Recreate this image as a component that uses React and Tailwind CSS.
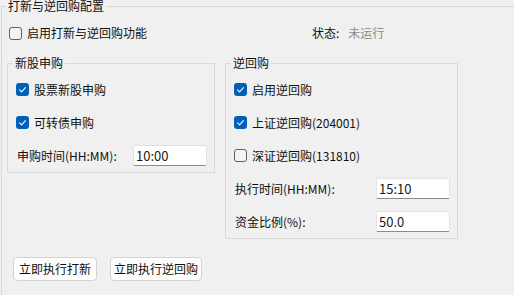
import React from 'react';

const font = { fontFamily: '"Noto Sans CJK SC", "Noto Sans", sans-serif' };

function Check({ checked }) {
  if (checked) {
    return (
      <span className="flex h-[13px] w-[13px] shrink-0 items-center justify-center rounded-[3px] bg-[#005fb8]">
        <svg width="13" height="13" viewBox="0 0 13 13" fill="none">
          <path d="M3.6 6.9 L5.6 8.8 L9.4 4.7" stroke="#ffffff" strokeWidth="1.1" strokeLinecap="round" strokeLinejoin="round" />
        </svg>
      </span>
    );
  }
  return <span className="h-[13px] w-[13px] shrink-0 rounded-[3px] border border-[#5f5f5f] bg-[#f4f4f4]" />;
}

function CheckRow({ checked, label }) {
  return (
    <div className="flex h-[33px] items-center gap-[5px] pl-[8px]">
      <Check checked={checked} />
      <span className="leading-[14px]">{label}</span>
    </div>
  );
}

function Field({ label, value, labelWidth }) {
  return (
    <div className="flex h-[33px] items-center pl-[9px]">
      <span className={`${labelWidth} leading-[14px]`}>{label}</span>
      <div className="flex h-[21px] w-[74px] items-center rounded-[2px] border border-[#e3e3e3] border-b-[#8a8a8a] bg-white pl-[2px] text-[13px] text-[#1a1a1a]">
        {value}
      </div>
    </div>
  );
}

export default function App() {
  return (
    <div className="h-[295px] w-[514px] overflow-hidden bg-[#f0f0f0] text-[12px] text-[#111111]" style={font}>
      <fieldset className="ml-px h-[320px] w-[540px] border border-[#d9d9d9]">
        <legend className="ml-[4px] px-[2px] leading-[12px]">打新与逆回购配置</legend>

        <div className="mt-[14px] flex h-[14px] items-center pl-[7px]">
          <div className="flex w-[303px] items-center gap-[5px]">
            <Check checked={false} />
            <span className="leading-[14px]">启用打新与逆回购功能</span>
          </div>
          <span className="leading-[14px]">状态:</span>
          <span className="ml-[9px] leading-[14px] text-[#8a8a8a]">未运行</span>
        </div>

        <div className="ml-[5px] mt-[17px] flex items-start gap-[10px]">
          <fieldset className="w-[208px] border border-[#dadada]">
            <legend className="ml-[5px] px-[2px] leading-[12px]">新股申购</legend>
            <div className="pt-[4px]">
              <CheckRow checked label="股票新股申购" />
              <CheckRow checked label="可转债申购" />
              <Field label="申购时间(HH:MM):" value="10:00" labelWidth="w-[116px]" />
            </div>
          </fieldset>

          <fieldset className="w-[233px] border border-[#dadada]">
            <legend className="ml-[5px] px-[2px] leading-[12px]">逆回购</legend>
            <div className="pt-[4px]">
              <CheckRow checked label="启用逆回购" />
              <CheckRow checked label="上证逆回购(204001)" />
              <CheckRow checked={false} label="深证逆回购(131810)" />
              <Field label="执行时间(HH:MM):" value="15:10" labelWidth="w-[141px]" />
              <Field label="资金比例(%):" value="50.0" labelWidth="w-[141px]" />
            </div>
          </fieldset>
        </div>

        <div className="ml-[11px] mt-[18px] flex gap-[13px]">
          <button className="flex h-[24px] w-[84px] items-center justify-center rounded-[4px] border border-[#d3d3d3] bg-[#fdfdfd] leading-[14px]">
            立即执行打新
          </button>
          <button className="flex h-[24px] w-[92px] items-center justify-center rounded-[4px] border border-[#d3d3d3] bg-[#fdfdfd] leading-[14px]">
            立即执行逆回购
          </button>
        </div>
      </fieldset>
    </div>
  );
}
